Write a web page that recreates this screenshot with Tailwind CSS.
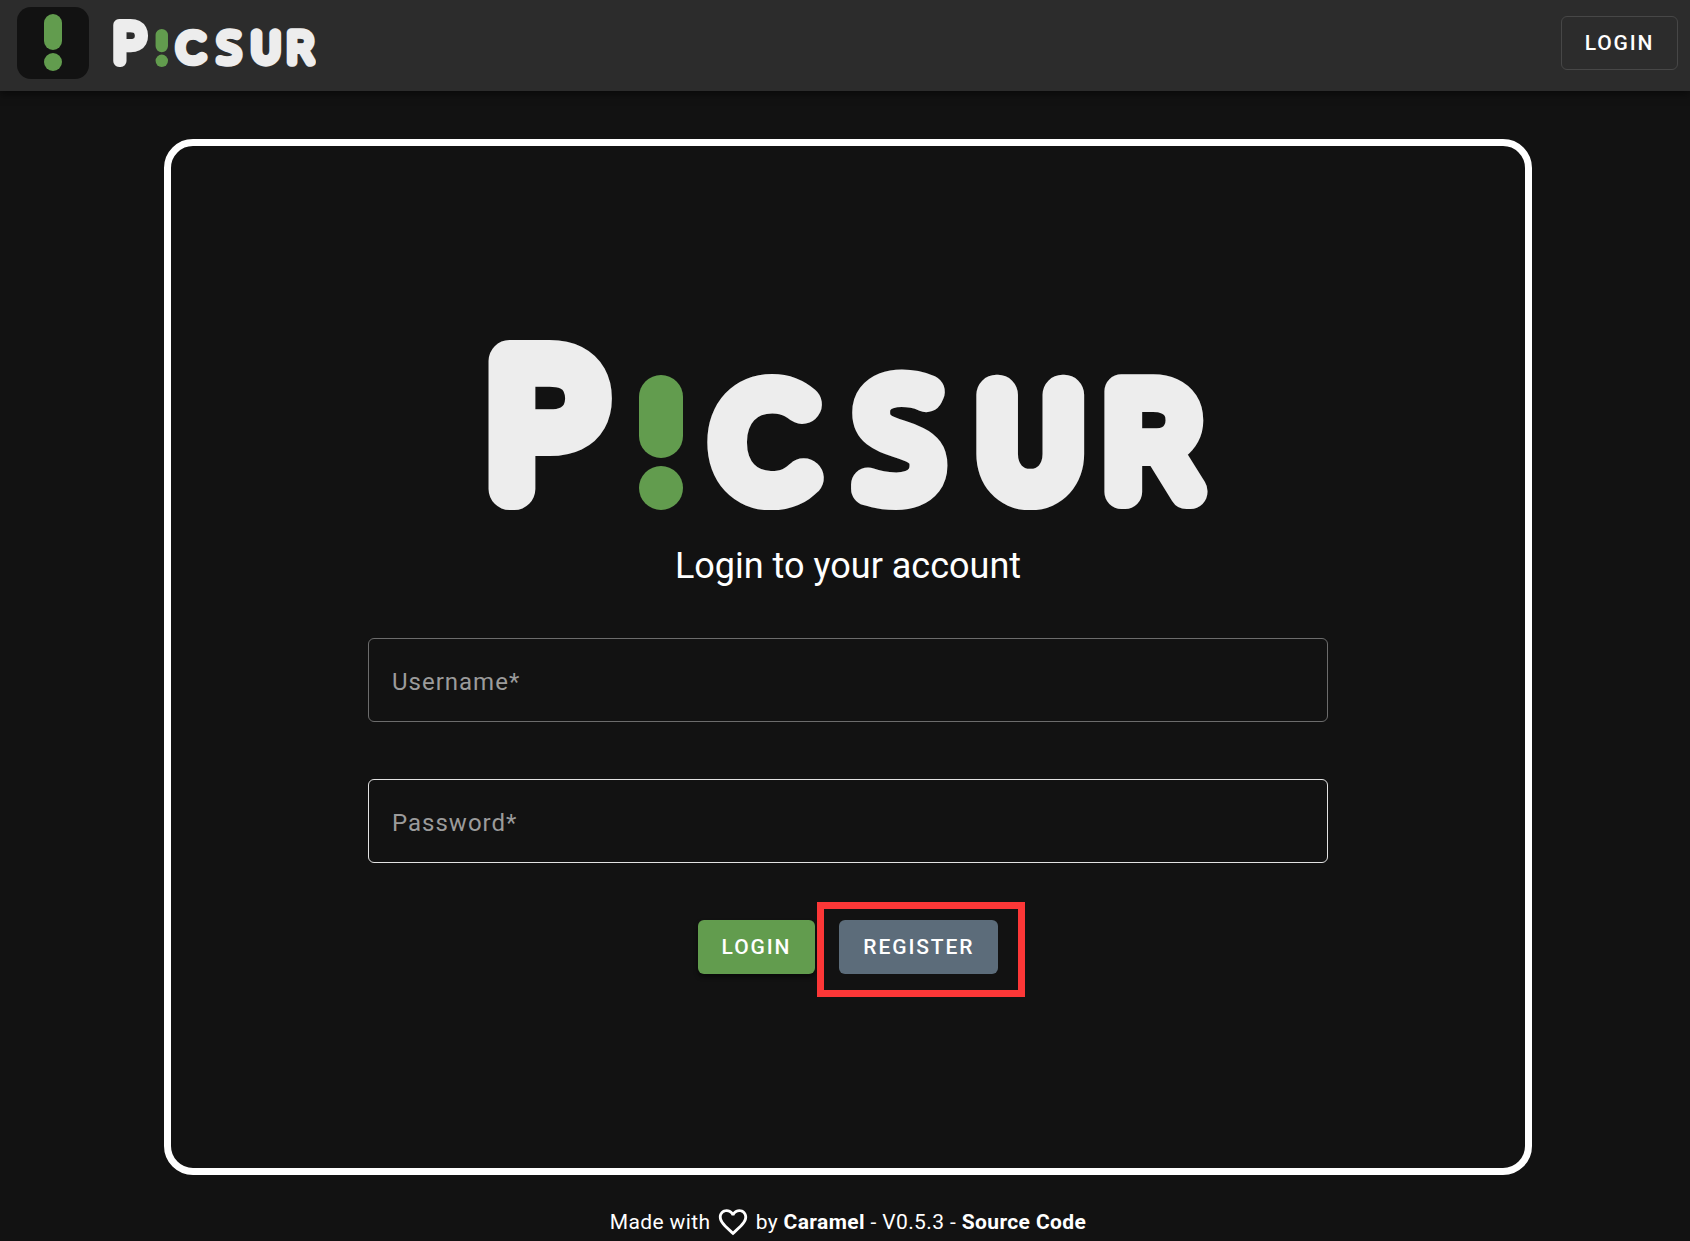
<!DOCTYPE html>
<html lang="en">
<head>
<meta charset="utf-8">
<meta name="viewport" content="width=device-width, initial-scale=1">
<title>Picsur - Login</title>
<script src="https://cdn.jsdelivr.net/npm/@tailwindcss/browser@4"></script>
</head>
<body class="flex min-h-screen flex-col bg-[#121212] font-['Roboto',sans-serif] text-white">

<!-- Wordmark, shared by the header and the login card -->
<svg class="hidden" aria-hidden="true">
  <symbol id="wordmark" viewBox="0 0 720 170" overflow="visible">
    <g fill="#ededed" stroke="#ededed" stroke-linejoin="round" stroke-linecap="round" font-weight="100">
      <text x="4" y="149" font-family="Roboto, sans-serif" font-size="180" stroke-width="42">P</text>
      <text x="229" y="150" font-family="Lato, sans-serif" font-size="137" stroke-width="38">C</text>
      <text x="372" y="152" font-family="Noto Sans, sans-serif" font-size="144" stroke-width="34">S</text>
      <text x="494" y="149" font-family="Lato, sans-serif" font-size="134" stroke-width="40">U</text>
      <text x="620" y="152" font-family="Roboto, sans-serif" font-size="141" stroke-width="34">R</text>
    </g>
    <rect x="151" y="35" width="44" height="83" rx="22" fill="#629c4e"/>
    <circle cx="173" cy="148" r="22" fill="#629c4e"/>
  </symbol>
</svg>

<header class="z-10 flex h-[91px] items-center bg-[#2c2c2c] pr-3 pb-[5px] pl-[17px] shadow-[0_3px_8px_rgba(0,0,0,0.5)]">
  <a href="#" aria-label="Picsur home" class="flex items-center gap-6">
    <svg class="size-[72px] rounded-[14px] bg-[#121212]" viewBox="0 0 72 72" fill="#629c4e">
      <rect x="27" y="7" width="18" height="36" rx="9"/>
      <circle cx="36" cy="55" r="9"/>
    </svg>
    <svg class="h-12 w-[203px]" role="img" aria-label="Picsur"><use href="#wordmark"/></svg>
  </a>
  <button type="button" class="ml-auto h-[54px] min-w-[117px] rounded-md border border-[#474747] px-[22px] pt-0.5 text-[21px] font-medium tracking-[0.09em]">LOGIN</button>
</header>

<main class="flex flex-1 flex-col pt-12 pr-[158px] pl-[164px]">
  <section class="flex flex-1 flex-col items-center justify-center rounded-[29px] border-[7px] border-white">
    <svg class="h-[170px] w-[720px] max-w-full" role="img" aria-label="Picsur"><use href="#wordmark"/></svg>
    <h1 class="mt-8 text-4xl leading-[48px]">Login to your account</h1>
    <form class="mt-12 flex w-full max-w-[960px] flex-col gap-[57px]">
      <div class="relative flex">
        <input id="username" type="text" placeholder=" " class="peer h-[84px] w-full rounded-md border border-[#6c6c6c] bg-transparent px-[23px] text-2xl tracking-[1px] outline-none">
        <label for="username" class="pointer-events-none absolute inset-y-0 left-6 hidden items-center pt-1 text-2xl tracking-[1px] text-[#9b9b9b] peer-placeholder-shown:flex">Username*</label>
      </div>
      <div class="relative flex">
        <input id="password" type="password" placeholder=" " class="peer h-[84px] w-full rounded-md border border-[#e2e2e2] bg-transparent px-[23px] text-2xl tracking-[1px] outline-none">
        <label for="password" class="pointer-events-none absolute inset-y-0 left-6 hidden items-center pt-1 text-2xl tracking-[1px] text-[#9b9b9b] peer-placeholder-shown:flex">Password*</label>
      </div>
      <div class="flex justify-center gap-6">
        <button type="submit" class="h-[54px] min-w-[117px] rounded-md bg-[#629c4e] px-6 pt-0.5 text-[21px] font-medium tracking-[0.09em] shadow-[0_3px_4px_rgba(0,0,0,0.5)]">LOGIN</button>
        <div class="relative">
          <button type="button" class="h-[54px] rounded-md bg-[#5c6c7a] px-6 pt-0.5 text-[21px] font-medium tracking-[0.09em]">REGISTER</button>
          <span class="pointer-events-none absolute -top-[18px] -right-[27px] -bottom-[23px] -left-[22px] border-[7px] border-[#fc3737]"></span>
        </div>
      </div>
    </form>
  </section>
  <footer class="flex h-[66px] items-center justify-center pt-7 text-[21px] leading-6 tracking-[0.018em]">
    <p class="flex items-center whitespace-pre">Made with <svg class="size-[34px]" viewBox="0 0 24 24" fill="#fff" aria-label="love"><path d="M16.5 3c-1.740 0-3.410.81-4.500 2.090C10.910 3.810 9.240 3 7.500 3 4.420 3 2 5.420 2 8.500c0 3.780 3.400 6.860 8.550 11.540L12 21.350l1.450-1.320C18.600 15.360 22 12.280 22 8.500 22 5.420 19.580 3 16.500 3zm-4.400 15.550l-.1.100-.1-.1C7.140 14.240 4 11.390 4 8.500 4 6.500 5.500 5 7.500 5c1.540 0 3.040.99 3.570 2.360h1.870C13.460 5.990 14.960 5 16.500 5c2 0 3.500 1.500 3.500 3.500 0 2.890-3.140 5.740-7.900 10.050z"/></svg> by <a href="#" class="font-bold">Caramel</a> - V0.5.3 - <a href="#" class="font-bold">Source Code</a></p>
  </footer>
</main>
</body>
</html>
